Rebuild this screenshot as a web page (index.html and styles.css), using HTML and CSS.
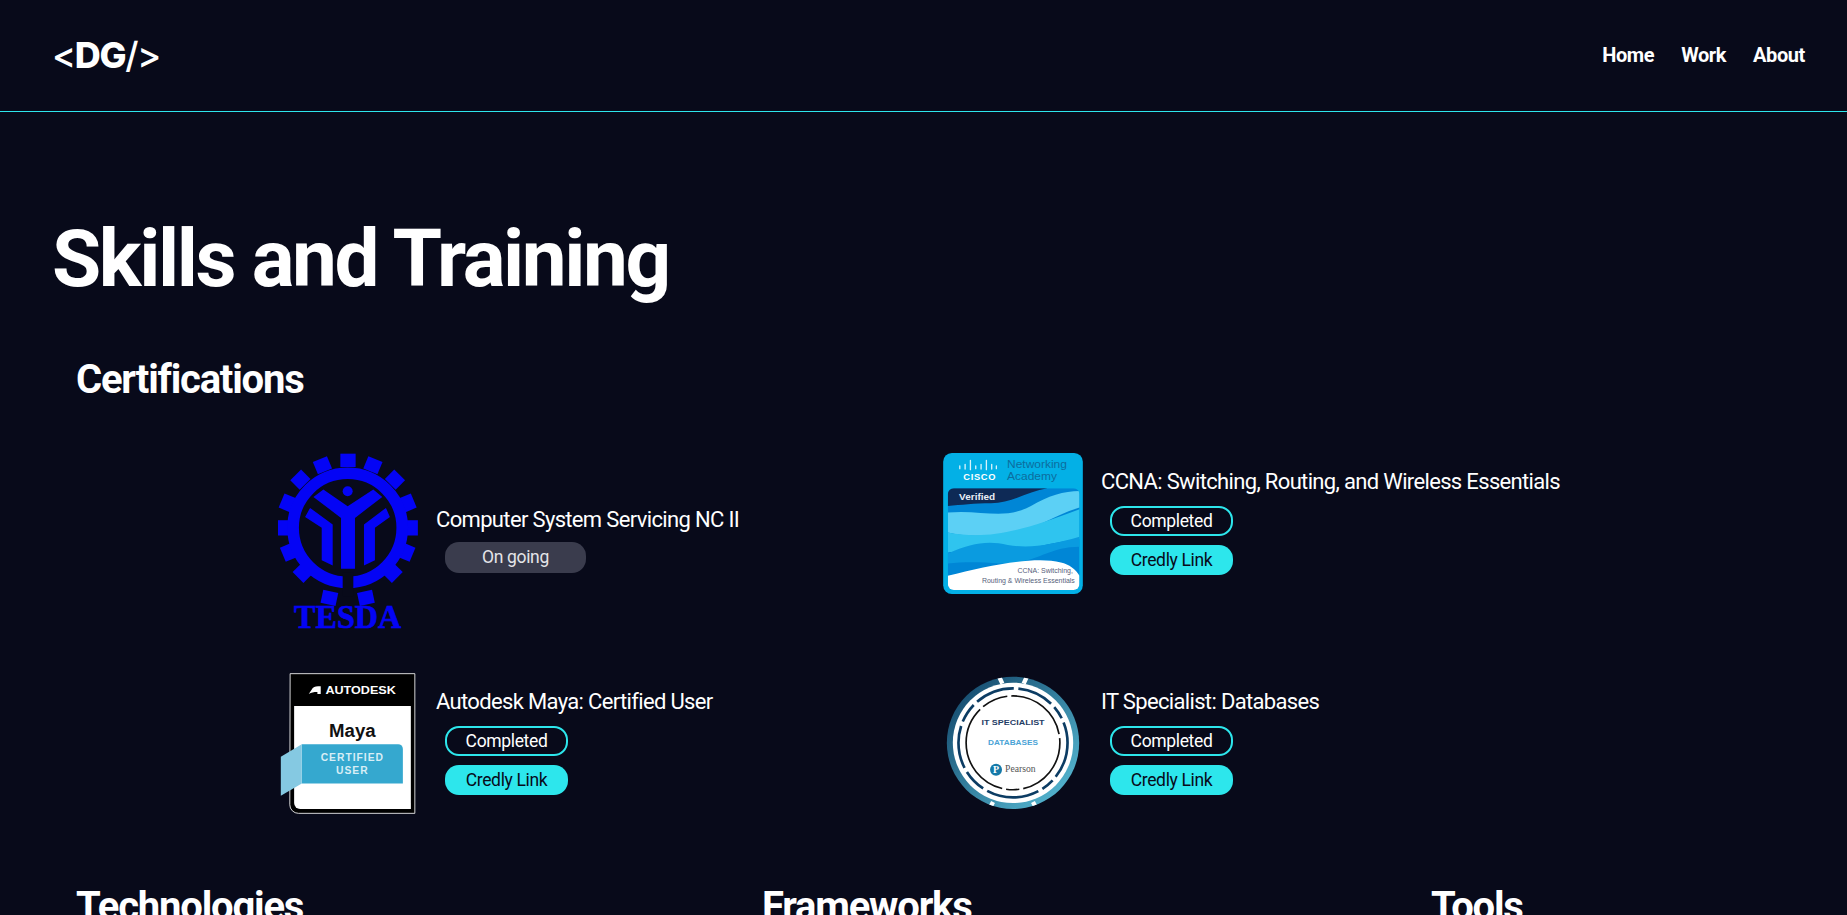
FILE: index.html
```html
<!DOCTYPE html>
<html lang="en">
  <head>
    <meta charset="UTF-8" />
    <meta name="viewport" content="width=device-width, initial-scale=1.0" />
    <title>Skills and Training</title>
    <link rel="stylesheet" href="styles.css">
  </head>
  <body>
    <header class="site-header">
      <a class="logo"><span class="logo-mark">&lt;</span>DG<span class="logo-mark">/&gt;</span></a>
      <nav class="nav">
        <a>Home</a>
        <a>Work</a>
        <a>About</a>
      </nav>
    </header>

    <main class="page">
      <h1>Skills and Training</h1>

      <section class="section">
        <h2>Certifications</h2>
        <div class="cert-grid">

          <div class="cert">
            <svg class="cert-img" width="140" height="183" viewBox="54 40 420 550">
              <g fill="#0404f5">
                <path d="M241 42h46v40h-46z" />
                <path d="M238 42h46v40h-46z" transform="rotate(22.5 263 265)" />
                <path d="M238 42h46v40h-46z" transform="rotate(45 263 265)" />
                <path d="M240 50h46v40h-46z" transform="rotate(67.5 263 265)" />
                <path d="M240 54h46v40h-46z" transform="rotate(90 263 265)" />
                <path d="M240 54h46v40h-46z" transform="rotate(112.5 263 265)" />
                <path d="M240 54h46v40h-46z" transform="rotate(135 263 265)" />
                <path d="M230 28h46v40h-46z" transform="rotate(168 263 265)" />
                <path d="M242 42h46v40h-46z" transform="rotate(-22.5 263 265)" />
                <path d="M242 42h46v40h-46z" transform="rotate(-45 263 265)" />
                <path d="M240 50h46v40h-46z" transform="rotate(-67.5 263 265)" />
                <path d="M240 54h46v40h-46z" transform="rotate(-90 263 265)" />
                <path d="M240 54h46v40h-46z" transform="rotate(-112.5 263 265)" />
                <path d="M240 54h46v40h-46z" transform="rotate(-135 263 265)" />
                <path d="M250 28h46v40h-46z" transform="rotate(-168 263 265)" />
                <circle cx="263" cy="155" r="15" />
                <path d="M160 172l30-22 73 50 77-50 27 22-82 63v153h-42V235z" />
                <path d="M135 232l15-27 68 50v123l-33-16V265z" />
                <path d="M390 232l-12-27-66 50v123l33-16V265z" />
              </g>
              <circle cx="263" cy="265" r="164" fill="none" stroke="#0404f5" stroke-width="35" />
              <path d="M248 400h32v70h-32z" fill="#080a1a" />
              <text class="tesda" x="263" y="567" textLength="322" lengthAdjust="spacingAndGlyphs" text-anchor="middle">TESDA</text>
            </svg>
            <div class="cert-info cert-info-short">
              <h3>Computer System Servicing NC II</h3>
              <span class="pill pill-muted">On going</span>
            </div>
          </div>

          <div class="cert">
            <svg class="cert-img" width="140" height="141" viewBox="38 26 420 424">
              <rect x="38" y="26" width="420" height="424" rx="26" fill="#03b0e6" />
              <g stroke="#fff" stroke-width="4" stroke-linecap="round">
                <path d="M88 65v8M104 60v14M120 48v28M136 65v8M152 60v14M168 48v28M184 60v14M198 65v8" opacity=".85" />
              </g>
              <text class="cisco-word" x="148" y="107" text-anchor="middle">CISCO</text>
              <text class="cisco-net" x="230" y="72" textLength="180" lengthAdjust="spacingAndGlyphs">Networking</text>
              <text class="cisco-net" x="230" y="108" textLength="150" lengthAdjust="spacingAndGlyphs">Academy</text>
              <clipPath id="card-clip"><rect x="52" y="132" width="396" height="306" rx="18" /></clipPath>
              <g clip-path="url(#card-clip)">
                <rect x="52" y="132" width="396" height="306" fill="#0086d6" />
                <path d="M52 132h300c-60 10-110 45-170 45-50 0-90 5-130 8z" fill="#0e2a56" />
                <path d="M52 205c100-10 170 25 250-20 50-30 100-45 146-45v50c-100 30-150 85-260 85-50 0-100 0-136-10z" fill="#5cd0f5" />
                <path d="M52 265c110 20 200 5 396-70v90c-100 10-170 40-280 45-50 0-90-10-116-5z" fill="#2fc4ef" />
                <path d="M52 328c70-30 120-40 180-25 70 10 130 0 216-25v30c-100 0-130 55-240 50-60-5-110-5-156 0z" fill="#0a9be0" />
                <path d="M52 395c120-30 260-60 340-40 25 6 45 20 56 40v43H52z" fill="#fff" />
              </g>
              <text class="cisco-verified" x="86" y="168">Verified</text>
              <text class="cisco-small" x="428" y="388" text-anchor="end">CCNA: Switching,</text>
              <text class="cisco-small" x="434" y="418" text-anchor="end">Routing &amp; Wireless Essentials</text>
            </svg>
            <div class="cert-info">
              <h3>CCNA: Switching, Routing, and Wireless Essentials</h3>
              <span class="pill pill-outline">Completed</span>
              <a class="pill pill-solid">Credly Link</a>
            </div>
          </div>

          <div class="cert">
            <svg class="cert-img" width="140" height="141" viewBox="54 42 420 424">
              <path d="M90 44h375v420H115a26 26 0 0 1-26-26z" fill="#000" stroke="#fff" stroke-width="2.5" />
              <path d="M102 141h351v310H120a18 18 0 0 1-18-18z" fill="#fff" />
              <path d="M146 105l12-18c6-4 12-5 24-5v23h-10v-6c-12 0-18 2-26 6z" fill="#fff" />
              <text class="adsk-word" x="302" y="105" text-anchor="middle" textLength="212" lengthAdjust="spacingAndGlyphs">AUTODESK</text>
              <text class="adsk-maya" x="277" y="233" text-anchor="middle">Maya</text>
              <path d="M125 256h290a14 14 0 0 1 14 14v104H125z" fill="#35a8cf" />
              <path d="M62 294l63-38v118l-63 37z" fill="#85c9e2" />
              <text class="adsk-tag" x="277" y="306" text-anchor="middle">CERTIFIED</text>
              <text class="adsk-tag" x="277" y="346" text-anchor="middle">USER</text>
            </svg>
            <div class="cert-info">
              <h3>Autodesk Maya: Certified User</h3>
              <span class="pill pill-outline">Completed</span>
              <a class="pill pill-solid">Credly Link</a>
            </div>
          </div>

          <div class="cert">
            <svg class="cert-img" width="140" height="141" viewBox="40 28 420 424">
              <defs>
                <linearGradient id="ring" x1="0" y1="0" x2="1" y2="1">
                  <stop offset="0" stop-color="#0e3f63" />
                  <stop offset="1" stop-color="#5cc3dc" />
                </linearGradient>
                <clipPath id="ring-clip"><circle cx="250" cy="238" r="199" /></clipPath>
              </defs>
              <circle cx="250" cy="238" r="199" fill="url(#ring)" />
              <circle cx="250" cy="238" r="181" fill="#fff" />
              <g clip-path="url(#ring-clip)" stroke="#fff" stroke-width="13">
                <path d="M204 30l14 30M296 30l-14 30M174 446l16-30M326 446l-16-30" />
              </g>
              <circle cx="250" cy="238" r="164" fill="none" stroke="#0c3c63" stroke-width="8" stroke-dasharray="110 14 40 14 160 14 70 14 130 14 60 14 120 14" />
              <circle cx="250" cy="238" r="141" fill="none" stroke="#111" stroke-width="5" stroke-dasharray="190 12 40 12 300 12 80 12 200 12" />
              <text class="pearson-title" x="250" y="183" text-anchor="middle" textLength="190" lengthAdjust="spacingAndGlyphs">IT SPECIALIST</text>
              <text class="pearson-sub" x="250" y="244" text-anchor="middle" textLength="150" lengthAdjust="spacingAndGlyphs">DATABASES</text>
              <circle cx="199" cy="319" r="18" fill="#1579a8" />
              <text class="pearson-p" x="199" y="329" text-anchor="middle">P</text>
              <text class="pearson-word" x="226" y="327" textLength="92" lengthAdjust="spacingAndGlyphs">Pearson</text>
            </svg>
            <div class="cert-info">
              <h3>IT Specialist: Databases</h3>
              <span class="pill pill-outline">Completed</span>
              <a class="pill pill-solid">Credly Link</a>
            </div>
          </div>

        </div>
      </section>

      <section class="section skill-cols">
        <h2>Technologies</h2>
        <h2>Frameworks</h2>
        <h2>Tools</h2>
      </section>
    </main>
  </body>
</html>
```

FILE: styles.css
```css
:root {
  --bg: #080a1a;
  --accent: #2de6ec;
  --muted: #3a3c4d;
  --text: #ffffff;
  --font: Roboto, sans-serif;
}

* {
  box-sizing: border-box;
}

html,
body {
  height: 100%;
  overflow: hidden;
}

body {
  margin: 0;
  background: var(--bg);
  color: var(--text);
  font-family: var(--font);
}

.site-header {
  display: flex;
  align-items: center;
  justify-content: space-between;
  height: 112px;
  padding: 0 42px 2px 53px;
  border-bottom: 1px solid var(--accent);
}

.logo {
  font-family: "Inter", sans-serif;
  font-size: 36px;
  font-weight: 800;
  letter-spacing: -1.3px;
  margin-left: -1px;
}

.logo-mark {
  font-weight: 500;
}

.nav {
  display: flex;
  gap: 27px;
  font-size: 20px;
  font-weight: 700;
  letter-spacing: -0.02em;
}

.page {
  padding: 0 53px;
}

h1 {
  margin: 108px 0 0 -1px;
  font-size: 80px;
  line-height: 78px;
  font-weight: 700;
  letter-spacing: -0.03em;
}

h2 {
  margin: 0;
  font-size: 40px;
  line-height: 54px;
  font-weight: 700;
  letter-spacing: -0.03em;
}

.section {
  padding-left: 23px;
}

.section > h2 {
  margin-top: 55px;
}

.cert-grid {
  display: grid;
  grid-template-columns: 665px 665px;
  align-items: start;
  row-gap: 37px;
  margin-top: 46px;
  padding-left: 202px;
}

.cert {
  display: flex;
  align-items: center;
  gap: 18px;
}

.cert-img {
  flex: none;
}

.cert-info {
  display: flex;
  flex-direction: column;
  align-items: flex-start;
  gap: 9px;
  padding-bottom: 10px;
}

.cert-info-short {
  gap: 7px;
  padding-bottom: 16px;
}

.cert-info h3 {
  margin: 2px 0 -2px;
  font-size: 22px;
  line-height: 34px;
  font-weight: 400;
  letter-spacing: -0.03em;
}

.pill {
  display: block;
  width: 123px;
  height: 30px;
  margin-left: 9px;
  border-radius: 14px;
  font-size: 17.5px;
  line-height: 26px;
  letter-spacing: -0.02em;
  text-align: center;
}

.pill-outline {
  border: 2px solid var(--accent);
}

.pill-solid {
  padding-top: 2px;
  background: var(--accent);
  color: #080a1a;
}

.pill-muted {
  width: 141px;
  height: 31px;
  padding-top: 2px;
  background: var(--muted);
  color: #e4e4e8;
}

.section.skill-cols {
  display: grid;
  grid-template-columns: 686px 669px 1fr;
}

.section.skill-cols > h2 {
  margin-top: 66px;
}

/* badge artwork text */
.tesda {
  font-family: "Liberation Serif", serif;
  font-size: 104px;
  font-weight: 700;
  fill: #0404f5;
  stroke: #0404f5;
  stroke-width: 2px;
}

.cisco-word {
  font: 700 28px "Liberation Sans", sans-serif;
  letter-spacing: 2px;
  fill: #fff;
}

.cisco-net {
  font: 400 33px "Liberation Sans", sans-serif;
  fill: #0c6d9e;
}

.cisco-verified {
  font: 700 30px "Liberation Sans", sans-serif;
  fill: #e8eef5;
}

.cisco-small {
  font: 400 21px "Liberation Sans", sans-serif;
  fill: #55607a;
}

.adsk-word {
  font: 700 32px "Liberation Sans", sans-serif;
  fill: #fff;
}

.adsk-maya {
  font: 700 56px "Liberation Sans", sans-serif;
  fill: #111;
}

.adsk-tag {
  font: 700 31px "Liberation Sans", sans-serif;
  letter-spacing: 3px;
  fill: #d8eef6;
}

.pearson-title {
  font: 700 24px "Liberation Sans", sans-serif;
  fill: #1f3d66;
}

.pearson-sub {
  font: 700 22px "Liberation Sans", sans-serif;
  fill: #4aa3d6;
}

.pearson-p {
  font: 700 30px "Liberation Serif", serif;
  fill: #fff;
}

.pearson-word {
  font: 400 28px "Liberation Serif", serif;
  fill: #555;
}
```
